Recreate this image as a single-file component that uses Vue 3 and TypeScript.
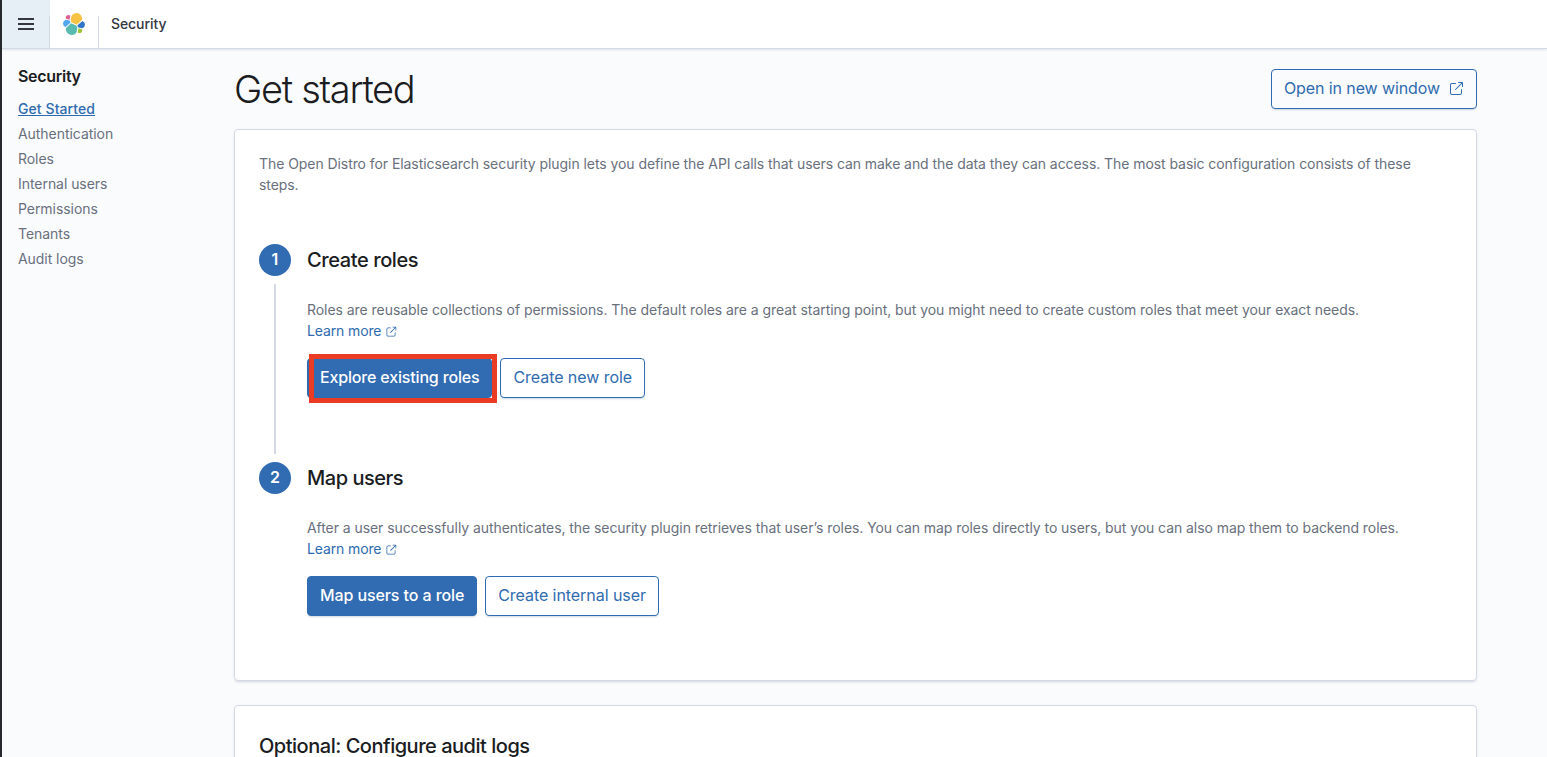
<script setup lang="ts">
interface Step {
  id: string
  title: string
  text: string
  primary: string
  secondary: string
  highlighted: boolean
}

const navItems: string[] = [
  'Get Started',
  'Authentication',
  'Roles',
  'Internal users',
  'Permissions',
  'Tenants',
  'Audit logs',
]

const steps: Step[] = [
  {
    id: 'roles',
    title: 'Create roles',
    text: 'Roles are reusable collections of permissions. The default roles are a great starting point, but you might need to create custom roles that meet your exact needs.',
    primary: 'Explore existing roles',
    secondary: 'Create new role',
    highlighted: true,
  },
  {
    id: 'users',
    title: 'Map users',
    text: 'After a user successfully authenticates, the security plugin retrieves that user’s roles. You can map roles directly to users, but you can also map them to backend roles.',
    primary: 'Map users to a role',
    secondary: 'Create internal user',
    highlighted: false,
  },
]

const popout =
  'M13 8.5a.5.5 0 1 1 1 0V12a2 2 0 0 1-2 2H4a2 2 0 0 1-2-2V4a2 2 0 0 1 2-2h3.5a.5.5 0 0 1 0 1H4a1 1 0 0 0-1 1v8a1 1 0 0 0 1 1h8a1 1 0 0 0 1-1V8.5zm-5.12.339a.5.5 0 1 1-.706-.707L13.305 2H10.5a.5.5 0 1 1 0-1H14a1 1 0 0 1 1 1v3.5a.5.5 0 1 1-1 0V2.72L7.88 8.838z'
</script>

<template>
  <div class="app">
    <header class="header">
      <button class="menu" aria-label="Menu">
        <svg width="16" height="16" viewBox="0 0 16 16"><path d="M0 2h16v2H0zM0 7h16v2H0zM0 12h16v2H0z" /></svg>
      </button>
      <div class="logo">
        <svg width="24" height="24" viewBox="0 0 32 32">
          <path fill="#f6c344" d="M12.58 13.787l7.002 3.211 7.066-6.213a7.849 7.849 0 00.152-1.557c0-4.287-3.464-7.774-7.723-7.774a7.699 7.699 0 00-6.357 3.38l-1.176 6.12 1.036 2.833z" />
          <path fill="#59bbb0" d="M5.333 21.226a7.964 7.964 0 00-.15 1.581c0 4.3 3.488 7.799 7.774 7.799a7.76 7.76 0 006.408-3.403l1.166-6.103-1.556-2.988-7.03-3.215-6.612 6.329z" />
          <path fill="#de5f97" d="M5.288 9.067l4.8 1.137L11.14 4.73a3.802 3.802 0 00-2.309-.781A3.81 3.81 0 005.03 7.764c0 .456.08.892.258 1.303z" />
          <path fill="#52a7f0" d="M4.872 10.214a5.302 5.302 0 00-3.525 4.998 5.3 5.3 0 003.403 4.95l6.733-6.112-1.236-2.655-5.375-1.181z" />
          <path fill="#9fc63b" d="M20.873 27.204a3.749 3.749 0 002.284.782 3.81 3.81 0 003.802-3.815c0-.458-.08-.893-.232-1.304l-4.795-1.128-1.059 5.465z" />
          <path fill="#3175c6" d="M21.848 20.563l5.28 1.24a5.304 5.304 0 003.526-5.002 5.3 5.3 0 00-3.395-4.944l-6.905 6.084 1.494 2.622z" />
        </svg>
      </div>
      <span class="crumb">Security</span>
    </header>

    <div class="body">
      <nav class="side">
        <h2 class="side-title">Security</h2>
        <a v-for="(item, i) in navItems" :key="item" class="side-link" :class="{ active: i === 0 }">{{ item }}</a>
      </nav>

      <main class="main">
        <div class="page-head">
          <h1 class="page-title">Get started</h1>
          <button class="btn open">
            <span>Open in new window</span>
            <svg width="16" height="16" viewBox="0 0 16 16"><path :d="popout" /></svg>
          </button>
        </div>

        <section class="panel first">
          <p class="text intro">
            The Open Distro for Elasticsearch security plugin lets you define the API calls that users can make and the data they can access. The most basic configuration consists of these steps.
          </p>
          <div v-for="(step, i) in steps" :key="step.id" class="step" :class="step.id">
            <div class="rail">
              <span class="number">{{ i + 1 }}</span>
              <span v-if="i < steps.length - 1" class="line"></span>
            </div>
            <div class="step-body">
              <h3 class="heading">{{ step.title }}</h3>
              <p class="text">
                {{ step.text }}<br />
                <a class="learn">Learn more<svg width="12" height="12" viewBox="0 0 16 16"><path :d="popout" /></svg></a>
              </p>
              <div class="actions">
                <button class="btn fill" :class="{ highlighted: step.highlighted }">{{ step.primary }}</button>
                <button class="btn">{{ step.secondary }}</button>
              </div>
            </div>
          </div>
        </section>

        <section class="panel second">
          <h3 class="heading">Optional: Configure audit logs</h3>
        </section>
      </main>
    </div>
  </div>
</template>

<style>
body {
  margin: 0;
  overflow: hidden;
}
</style>

<style scoped>
.app {
  box-sizing: border-box;
  height: 757px;
  overflow: hidden;
  display: flex;
  flex-direction: column;
  border-left: 2px solid #25282d;
  background: #fafbfd;
  color: #1a1c21;
  font-family: Inter, "Liberation Sans", sans-serif;
  font-size: 14px;
}
h1, h2, h3, p {
  margin: 0;
}
button {
  font: inherit;
}
.header {
  position: relative;
  box-sizing: border-box;
  flex: none;
  height: 49px;
  display: flex;
  background: #fff;
  border-bottom: 1px solid #d3dae6;
  box-shadow: 0 2px 2px -1px rgba(152, 162, 179, 0.3);
}
.menu,
.logo {
  box-sizing: border-box;
  height: 48px;
  display: flex;
  align-items: center;
  justify-content: center;
  padding: 0;
  border: 0;
  background: linear-gradient(#d3dae6, #d3dae6) right bottom / 1px 32px no-repeat;
}
.menu {
  width: 48px;
  background-color: #e6eef6;
  fill: #343741;
}
.logo {
  width: 49px;
  padding-right: 1px;
}
.crumb {
  margin-left: 12px;
  line-height: 48px;
  font-weight: 500;
  color: #343741;
  letter-spacing: -0.08px;
}
.body {
  flex: 1;
  min-height: 0;
  display: flex;
}
.side {
  width: 216px;
  flex: none;
  padding: 15px 0 0 16px;
  box-sizing: border-box;
  display: flex;
  flex-direction: column;
}
.side-title {
  font-size: 16px;
  line-height: 24px;
  font-weight: 600;
  letter-spacing: -0.3px;
  margin-bottom: 8px;
}
.side-link {
  line-height: 25px;
  color: #69707d;
  letter-spacing: -0.05px;
}
.side-link.active {
  color: #2f6bb0;
  font-weight: 500;
  letter-spacing: 0.08px;
  text-decoration: underline;
}
.main {
  width: 1243px;
  margin-left: 16px;
}
.page-head {
  display: flex;
  justify-content: space-between;
  align-items: center;
  height: 80px;
}
.page-title {
  font-size: 38px;
  font-weight: 300;
  line-height: 48px;
  padding-bottom: 1px;
  letter-spacing: -1.28px;
}
.btn {
  box-sizing: border-box;
  height: 40px;
  padding: 0 12px 2px;
  border: 1px solid #2f6bb0;
  border-radius: 4px;
  background: #fff;
  color: #2f6bb0;
  font-size: 16px;
  letter-spacing: -0.06px;
  white-space: nowrap;
  box-shadow: 0 2px 2px -1px rgba(54, 97, 126, 0.25);
}
.btn.fill {
  background: #316bb1;
  color: #fff;
  font-weight: 500;
  letter-spacing: -0.1px;
}
.btn.highlighted {
  position: relative;
  letter-spacing: -0.17px;
}
.btn.open {
  display: flex;
  align-items: center;
  gap: 8px;
  background: transparent;
  fill: #2f6bb0;
  letter-spacing: -0.1px;
}
.open svg {
  margin-top: 1px;
}
.panel {
  box-sizing: border-box;
  border: 1px solid #d3dae6;
  border-radius: 4px;
  background: #fff;
  padding: 24px;
  box-shadow: 0 2px 2px -1px rgba(152, 162, 179, 0.3), 0 1px 5px -2px rgba(152, 162, 179, 0.3);
}
.first {
  height: 552px;
  padding-top: 23px;
}
.second {
  margin-top: 24px;
  height: 200px;
}
.text {
  line-height: 21px;
  color: #69707d;
}
.intro {
  padding-right: 24px;
  margin-bottom: 49px;
  letter-spacing: -0.068px;
}
.roles .text {
  letter-spacing: -0.052px;
}
.users .text {
  letter-spacing: -0.068px;
}
.step {
  display: flex;
  height: 218px;
}
.rail {
  width: 48px;
  display: flex;
  flex-direction: column;
  align-items: flex-start;
}
.number {
  width: 32px;
  height: 32px;
  border-radius: 50%;
  background: #316bb1;
  color: #fff;
  font-weight: 600;
  font-size: 16px;
  line-height: 31px;
  text-align: center;
}
.line {
  width: 2px;
  height: 170px;
  margin: 8px 0 0 15px;
  background: #d3dae6;
}
.step-body {
  flex: 1;
  white-space: nowrap;
}
.heading {
  font-size: 20px;
  line-height: 32px;
  font-weight: 500;
  letter-spacing: -0.48px;
}
.step .heading {
  margin-bottom: 23px;
}
.roles .heading {
  letter-spacing: -0.4px;
}
.learn {
  color: #2f6bb0;
  fill: #2f6bb0;
  letter-spacing: -0.13px;
}
.learn svg {
  margin-left: 4px;
  vertical-align: -2px;
}
.actions {
  display: flex;
  gap: 8px;
  margin-top: 17px;
}
.highlighted::after {
  content: "";
  position: absolute;
  left: 1px;
  top: -5px;
  right: -6px;
  bottom: -6px;
  border: 5px solid #ea3c24;
}
</style>
